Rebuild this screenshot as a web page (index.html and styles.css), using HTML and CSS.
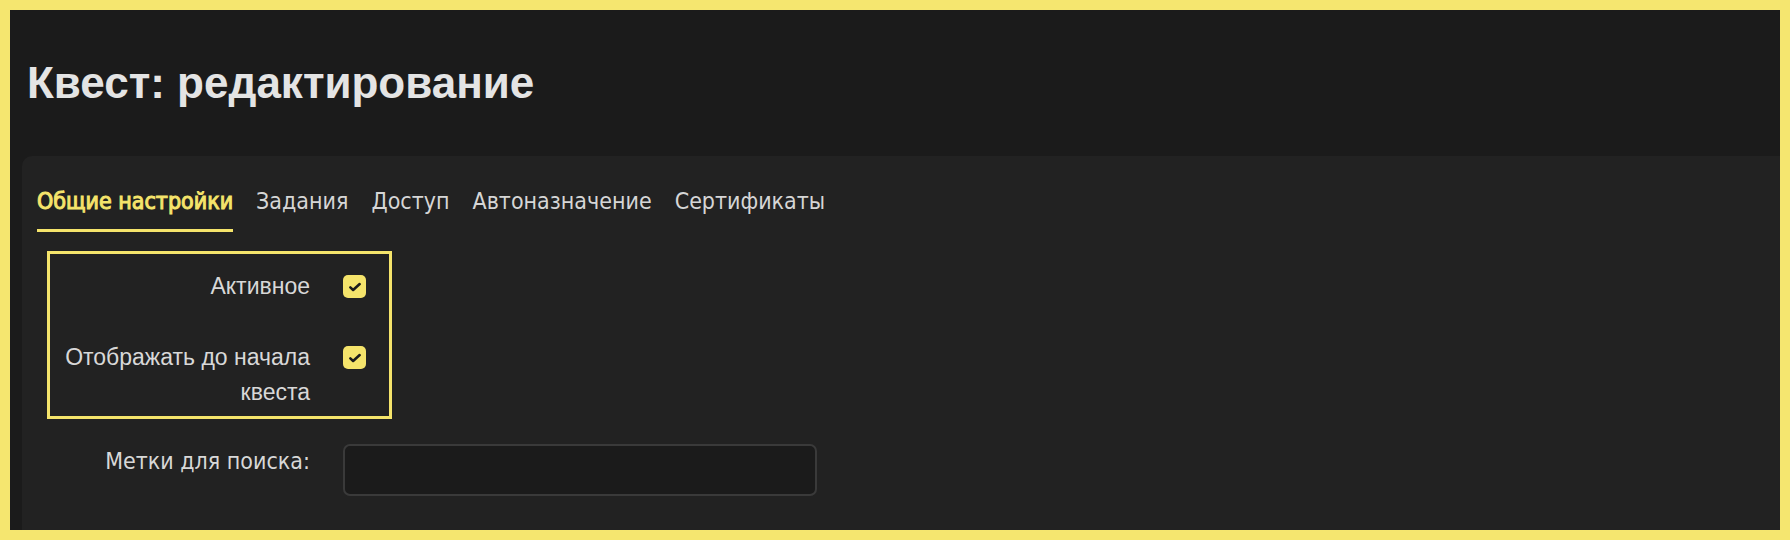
FILE: index.html
```html
<!DOCTYPE html>
<html lang="ru">
<head>
  <meta charset="UTF-8" />
  <meta name="viewport" content="width=device-width, initial-scale=1" />
  <title>Квест: редактирование</title>
  <link rel="stylesheet" href="styles.css">
</head>
<body>
  <div class="frame">
    <header class="page-head">
      <h1>Квест: редактирование</h1>
    </header>

    <section class="card">
      <nav class="tabs">
        <span class="tab active">Общие настройки</span>
        <span class="tab">Задания</span>
        <span class="tab">Доступ</span>
        <span class="tab">Автоназначение</span>
        <span class="tab">Сертификаты</span>
      </nav>

      <form class="form">
        <div class="highlight">
          <div class="row row-first">
            <label class="label">Активное</label>
            <div class="control">
              <span class="checkbox">
                <svg viewBox="0 0 24 24" width="16" height="16"><path d="M5 12.5l4.2 4L19 7.5" fill="none" stroke="#1b1b1b" stroke-width="3.8" stroke-linecap="round" stroke-linejoin="round"/></svg>
              </span>
            </div>
          </div>
          <div class="row">
            <label class="label">Отображать до начала квеста</label>
            <div class="control">
              <span class="checkbox">
                <svg viewBox="0 0 24 24" width="16" height="16"><path d="M5 12.5l4.2 4L19 7.5" fill="none" stroke="#1b1b1b" stroke-width="3.8" stroke-linecap="round" stroke-linejoin="round"/></svg>
              </span>
            </div>
          </div>
        </div>

        <div class="row row-tags">
          <label class="label label-cond">Метки для поиска:</label>
          <div class="control">
            <input type="text" class="text-input">
          </div>
        </div>
      </form>
    </section>
  </div>
</body>
</html>
```

FILE: styles.css
```css
html, body {
  margin: 0;
  background: #f5e66f;
}
.frame {
  box-sizing: border-box;
  height: 540px;
  border: 10px solid #f5e66f;
  background: #1b1b1b;
  display: flex;
  flex-direction: column;
  padding-left: 12px;
  overflow: hidden;
}
.page-head {
  padding-top: 48px;
}
.page-head h1 {
  margin: 0 0 0 5px;
  font-family: "Liberation Sans", Arial, sans-serif;
  font-size: 44px;
  line-height: 50px;
  font-weight: bold;
  color: #e4e4e4;
}
.card {
  flex: 1;
  margin-top: 48px;
  background: #222222;
  border-top-left-radius: 10px;
  padding: 0 0 0 15px;
}
.tabs {
  display: flex;
  gap: 23px;
  padding-top: 32px;
  font-family: "DejaVu Sans Condensed", "DejaVu Sans", sans-serif;
  font-stretch: condensed;
  font-size: 23px;
  color: #d6d6d6;
}
.tab {
  line-height: 26px;
  padding-bottom: 15px;
  border-bottom: 3px solid transparent;
}
.tab.active {
  color: #f5e46b;
  -webkit-text-stroke: 1px #f5e46b;
  border-bottom-color: #f5e46b;
}
.form {
  margin-top: 19px;
  margin-left: 10px;
}
.highlight {
  width: 339px;
  border: 3px solid #f5e46b;
  padding: 15px 0 6px;
}
.row {
  display: grid;
  grid-template-columns: 260px 1fr;
  column-gap: 33px;
  margin-top: 36px;
}
.row-first {
  margin-top: 0;
}
.label {
  text-align: right;
  font-family: "Liberation Sans", Arial, sans-serif;
  font-size: 23px;
  line-height: 35px;
  color: #d8d8d8;
}
.label-cond {
  font-family: "DejaVu Sans Condensed", "DejaVu Sans", sans-serif;
  font-stretch: condensed;
  line-height: 34px;
}
.control {
  display: flex;
  align-items: flex-start;
}
.checkbox {
  margin-top: 6px;
  width: 23px;
  height: 23px;
  border-radius: 5px;
  background: #f5e46b;
  display: flex;
  align-items: center;
  justify-content: center;
}
.row-tags {
  margin: 25px 0 0 3px;
}
.text-input {
  box-sizing: border-box;
  width: 474px;
  height: 52px;
  background: #1b1b1b;
  border: 2px solid #3a3a3a;
  border-radius: 7px;
  outline: none;
}
```
